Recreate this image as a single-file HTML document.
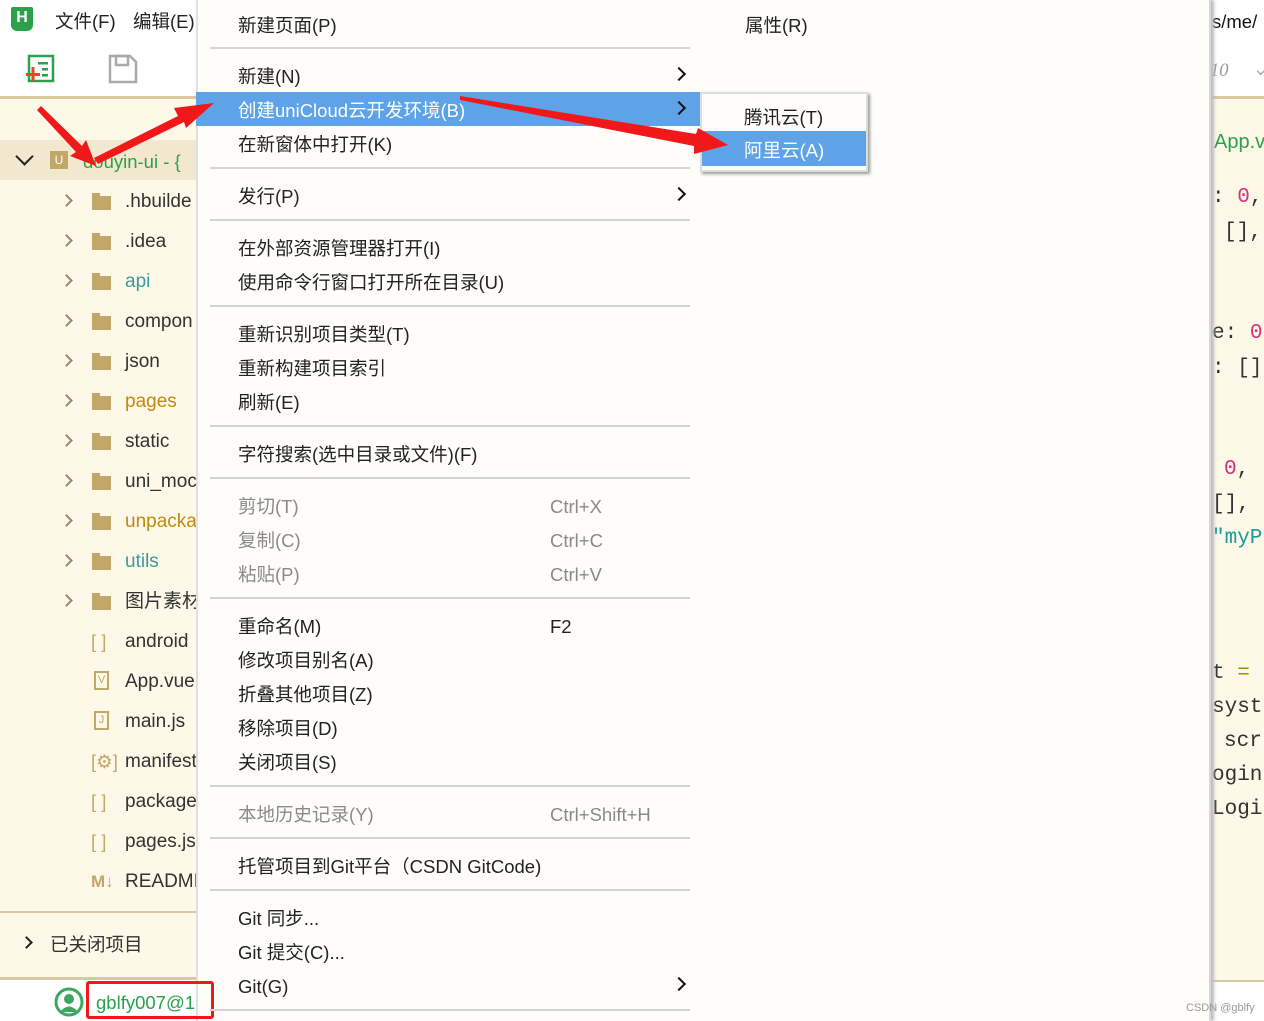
<!DOCTYPE html>
<html><head><meta charset="utf-8"><style>
*{margin:0;padding:0;box-sizing:border-box}
body{width:1264px;height:1021px;overflow:hidden;position:relative;background:#fdf8e8;font-family:"Liberation Sans","Noto Sans CJK SC",sans-serif;font-size:18.5px;color:#222}
.a{position:absolute;white-space:nowrap;line-height:24px;margin-top:2px}
.sep{position:absolute;left:210px;width:480px;height:2px;background:#d4d4d4}
.g{color:#8a8a8a}
.chev{position:absolute;width:10px;height:10px;border-right:2.5px solid #111;border-top:2.5px solid #111;transform:rotate(45deg)}
.sc{position:absolute;width:9px;height:9px;border-right:2px solid #9a8a6a;border-top:2px solid #9a8a6a;transform:rotate(45deg)}
.fold{position:absolute;width:19px;height:14px;background:#c2a868}
.fold:before{content:"";position:absolute;left:0;top:-3px;width:8px;height:3px;background:#c2a868}
.st{font-size:19px;color:#333}
.code{position:absolute;font-family:"Liberation Mono",monospace;font-size:21px;color:#333;line-height:24px;white-space:nowrap;margin-top:2px}
</style></head><body>
<div style="position:absolute;left:0;top:0;width:1264px;height:96px;background:#fff"></div>
<div style="position:absolute;left:0;top:96px;width:1264px;height:3px;background:#d8c9a0"></div>
<div style="position:absolute;left:11px;top:7px;width:22px;height:24px;background:#2aa14a;border-radius:2px 2px 6px 6px;color:#fff;font-size:16px;font-weight:bold;text-align:center;line-height:22px">H</div>
<div class="a" style="left:55px;top:8px">文件(F)</div>
<div class="a" style="left:133px;top:8px">编辑(E)</div>
<svg style="position:absolute;left:26px;top:54px" width="30" height="30"><rect x="3" y="2" width="24" height="25" fill="none" stroke="#2aa14a" stroke-width="2.5"/><rect x="12" y="8" width="10" height="2.5" fill="#2aa14a"/><rect x="16" y="14" width="6" height="2.5" fill="#2aa14a"/><rect x="16" y="20" width="6" height="2.5" fill="#2aa14a"/><rect x="0" y="19" width="14" height="3" fill="#e04a2a"/><rect x="5.5" y="13" width="3" height="14" fill="#e04a2a"/></svg>
<svg style="position:absolute;left:108px;top:54px" width="30" height="30"><path d="M2 2H22L28 8V28H2Z" fill="none" stroke="#aaa" stroke-width="2.5"/><rect x="8" y="2" width="12" height="9" fill="none" stroke="#aaa" stroke-width="2.5"/></svg>
<div class="a" style="left:1212px;top:8px;color:#111">s/me/</div>
<div class="a" style="left:1210px;top:57px;color:#999;font-style:italic;font-family:'Liberation Serif',serif">10</div>
<div class="a" style="left:1253px;top:55px;color:#aaa">⌄</div>
<div class="a" style="left:1214px;top:128px;color:#2aa14a;font-size:20px">App.v</div>
<div class="code" style="left:1212px;top:184px">: <span style="color:#d6337a">0</span>,</div>
<div class="code" style="left:1224px;top:219px">[],</div>
<div class="code" style="left:1212px;top:320px">e: <span style="color:#d6337a">0</span></div>
<div class="code" style="left:1212px;top:355px">: []</div>
<div class="code" style="left:1224px;top:456px"><span style="color:#d6337a">0</span>,</div>
<div class="code" style="left:1212px;top:491px">[],</div>
<div class="code" style="left:1212px;top:525px;color:#1a9a9a">"myP</div>
<div class="code" style="left:1212px;top:660px">t <span style="color:#8a9a00">=</span></div>
<div class="code" style="left:1212px;top:694px">syst</div>
<div class="code" style="left:1224px;top:728px">scr</div>
<div class="code" style="left:1212px;top:762px">ogin</div>
<div class="code" style="left:1212px;top:796px">Logi</div>
<div style="position:absolute;left:1210px;top:980px;width:54px;height:2px;background:#d8c9a0"></div>
<div style="position:absolute;left:1210px;top:982px;width:54px;height:39px;background:#fff"></div>
<div style="position:absolute;left:0;top:140px;width:196px;height:40px;background:#f1e8cf"></div>
<div style="position:absolute;left:18px;top:150px;width:13px;height:13px;border-right:2.5px solid #222;border-bottom:2.5px solid #222;transform:rotate(45deg)"></div>
<div style="position:absolute;left:50px;top:151px;width:18px;height:18px;background:#c2a868;color:#fff;font-size:12px;text-align:center;line-height:18px">U</div>
<div class="a" style="left:83px;top:148px;color:#2aa14a">douyin-ui - {</div>
<div class="sc" style="left:62px;top:196px"></div><div class="fold" style="left:92px;top:196px"></div><div class="a st" style="left:125px;top:188px">.hbuilde</div>
<div class="sc" style="left:62px;top:236px"></div><div class="fold" style="left:92px;top:236px"></div><div class="a st" style="left:125px;top:228px">.idea</div>
<div class="sc" style="left:62px;top:276px"></div><div class="fold" style="left:92px;top:276px"></div><div class="a st" style="left:125px;top:268px;color:#3a9a9a">api</div>
<div class="sc" style="left:62px;top:316px"></div><div class="fold" style="left:92px;top:316px"></div><div class="a st" style="left:125px;top:308px">compon</div>
<div class="sc" style="left:62px;top:356px"></div><div class="fold" style="left:92px;top:356px"></div><div class="a st" style="left:125px;top:348px">json</div>
<div class="sc" style="left:62px;top:396px"></div><div class="fold" style="left:92px;top:396px"></div><div class="a st" style="left:125px;top:388px;color:#c08a10">pages</div>
<div class="sc" style="left:62px;top:436px"></div><div class="fold" style="left:92px;top:436px"></div><div class="a st" style="left:125px;top:428px">static</div>
<div class="sc" style="left:62px;top:476px"></div><div class="fold" style="left:92px;top:476px"></div><div class="a st" style="left:125px;top:468px">uni_moc</div>
<div class="sc" style="left:62px;top:516px"></div><div class="fold" style="left:92px;top:516px"></div><div class="a st" style="left:125px;top:508px;color:#c08a10">unpacka</div>
<div class="sc" style="left:62px;top:556px"></div><div class="fold" style="left:92px;top:556px"></div><div class="a st" style="left:125px;top:548px;color:#3a9a9a">utils</div>
<div class="sc" style="left:62px;top:596px"></div><div class="fold" style="left:92px;top:596px"></div><div class="a st" style="left:125px;top:588px">图片素材</div>
<div class="a" style="left:91px;top:628px;color:#c2a868">[ ]</div><div class="a st" style="left:125px;top:628px">android</div>
<div style="position:absolute;left:94px;top:671px;width:15px;height:19px;border:2px solid #c2a868;font-size:11px;color:#c2a868;text-align:center;line-height:15px">V</div><div class="a st" style="left:125px;top:668px">App.vue</div>
<div style="position:absolute;left:94px;top:711px;width:15px;height:19px;border:2px solid #c2a868;font-size:11px;color:#c2a868;text-align:center;line-height:15px">J</div><div class="a st" style="left:125px;top:708px">main.js</div>
<div class="a" style="left:91px;top:748px;color:#c2a868">[⚙]</div><div class="a st" style="left:125px;top:748px">manifest</div>
<div class="a" style="left:91px;top:788px;color:#c2a868">[ ]</div><div class="a st" style="left:125px;top:788px">package</div>
<div class="a" style="left:91px;top:828px;color:#c2a868">[ ]</div><div class="a st" style="left:125px;top:828px">pages.js</div>
<div class="a" style="left:91px;top:868px;color:#c2a868;font-weight:bold;font-size:17px">M↓</div><div class="a st" style="left:125px;top:868px">READMI</div>
<div style="position:absolute;left:0;top:911px;width:196px;height:2px;background:#d8c9a0"></div>
<div class="sc" style="left:22px;top:938px;border-color:#222"></div>
<div class="a" style="left:50px;top:931px;color:#333">已关闭项目</div>
<div style="position:absolute;left:0;top:977px;width:196px;height:3px;background:#d8c9a0"></div>
<div style="position:absolute;left:0;top:980px;width:196px;height:41px;background:#fff"></div>
<svg style="position:absolute;left:54px;top:987px" width="30" height="30"><circle cx="15" cy="15" r="13" fill="none" stroke="#3aa860" stroke-width="3"/><circle cx="15" cy="12" r="5" fill="#3aa860"/><path d="M6 25Q15 14 24 25Z" fill="#3aa860"/></svg>
<div class="a" style="left:96px;top:989px;color:#2aa14a">gblfy007@1</div>
<!-- menu -->
<div style="position:absolute;left:196px;top:0;width:1015px;height:1021px;background:#fefdf9;border-left:2px solid #e0e0e0;border-right:2px solid #d8d8d8;box-shadow:3px 0 3px #bbb"></div>
<div style="position:absolute;left:86px;top:981px;width:128px;height:38px;border:3px solid #f01818;border-radius:3px"></div>
<div class="a" style="left:1186px;top:994px;font-size:11px;color:#999">CSDN @gblfy</div>
<div style="position:absolute;left:196px;top:92px;width:504px;height:34px;background:#5ea3e8"></div>
<div class="a" style="left:238px;top:12px">新建页面(P)</div>
<div class="a" style="left:745px;top:12px">属性(R)</div>
<div class="sep" style="top:47px"></div>
<div class="a" style="left:238px;top:63px">新建(N)</div><div class="chev" style="left:674px;top:69px"></div>
<div class="a" style="left:238px;top:97px;color:#fff">创建uniCloud云开发环境(B)</div><div class="chev" style="left:674px;top:103px"></div>
<div class="a" style="left:238px;top:131px">在新窗体中打开(K)</div>
<div class="sep" style="top:167px"></div>
<div class="a" style="left:238px;top:183px">发行(P)</div><div class="chev" style="left:674px;top:189px"></div>
<div class="sep" style="top:219px"></div>
<div class="a" style="left:238px;top:235px">在外部资源管理器打开(I)</div>
<div class="a" style="left:238px;top:269px">使用命令行窗口打开所在目录(U)</div>
<div class="sep" style="top:305px"></div>
<div class="a" style="left:238px;top:321px">重新识别项目类型(T)</div>
<div class="a" style="left:238px;top:355px">重新构建项目索引</div>
<div class="a" style="left:238px;top:389px">刷新(E)</div>
<div class="sep" style="top:425px"></div>
<div class="a" style="left:238px;top:441px">字符搜索(选中目录或文件)(F)</div>
<div class="sep" style="top:477px"></div>
<div class="a g" style="left:238px;top:493px">剪切(T)</div><div class="a g" style="left:550px;top:493px">Ctrl+X</div>
<div class="a g" style="left:238px;top:527px">复制(C)</div><div class="a g" style="left:550px;top:527px">Ctrl+C</div>
<div class="a g" style="left:238px;top:561px">粘贴(P)</div><div class="a g" style="left:550px;top:561px">Ctrl+V</div>
<div class="sep" style="top:597px"></div>
<div class="a" style="left:238px;top:613px">重命名(M)</div><div class="a" style="left:550px;top:613px">F2</div>
<div class="a" style="left:238px;top:647px">修改项目别名(A)</div>
<div class="a" style="left:238px;top:681px">折叠其他项目(Z)</div>
<div class="a" style="left:238px;top:715px">移除项目(D)</div>
<div class="a" style="left:238px;top:749px">关闭项目(S)</div>
<div class="sep" style="top:785px"></div>
<div class="a g" style="left:238px;top:801px">本地历史记录(Y)</div><div class="a g" style="left:550px;top:801px">Ctrl+Shift+H</div>
<div class="sep" style="top:837px"></div>
<div class="a" style="left:238px;top:853px">托管项目到Git平台（CSDN GitCode)</div>
<div class="sep" style="top:889px"></div>
<div class="a" style="left:238px;top:905px">Git 同步...</div>
<div class="a" style="left:238px;top:939px">Git 提交(C)...</div>
<div class="a" style="left:238px;top:973px">Git(G)</div><div class="chev" style="left:674px;top:979px"></div>
<div class="sep" style="top:1009px"></div>
<div style="position:absolute;left:700px;top:92px;width:168px;height:80px;background:#fefdf9;border:2px solid #ddd;box-shadow:2px 2px 3px #999"></div>
<div style="position:absolute;left:702px;top:131px;width:164px;height:35px;background:#5ea3e8"></div>
<div class="a" style="left:744px;top:104px">腾讯云(T)</div>
<div class="a" style="left:744px;top:137px;color:#fff">阿里云(A)</div>
<svg style="position:absolute;left:0;top:0" width="1264" height="1021">
<g fill="#f01818">
<path d="M37 110L41 106L82 146L86 140L96 166L70 156L76 152Z"/>
<path d="M98 164L94 158L178 116L174 108L214 103L186 128L184 122Z"/>
<path d="M460 100L460 96L696 134L698 128L728 145L694 154L694 146Z"/>
</g></svg>
</body></html>
